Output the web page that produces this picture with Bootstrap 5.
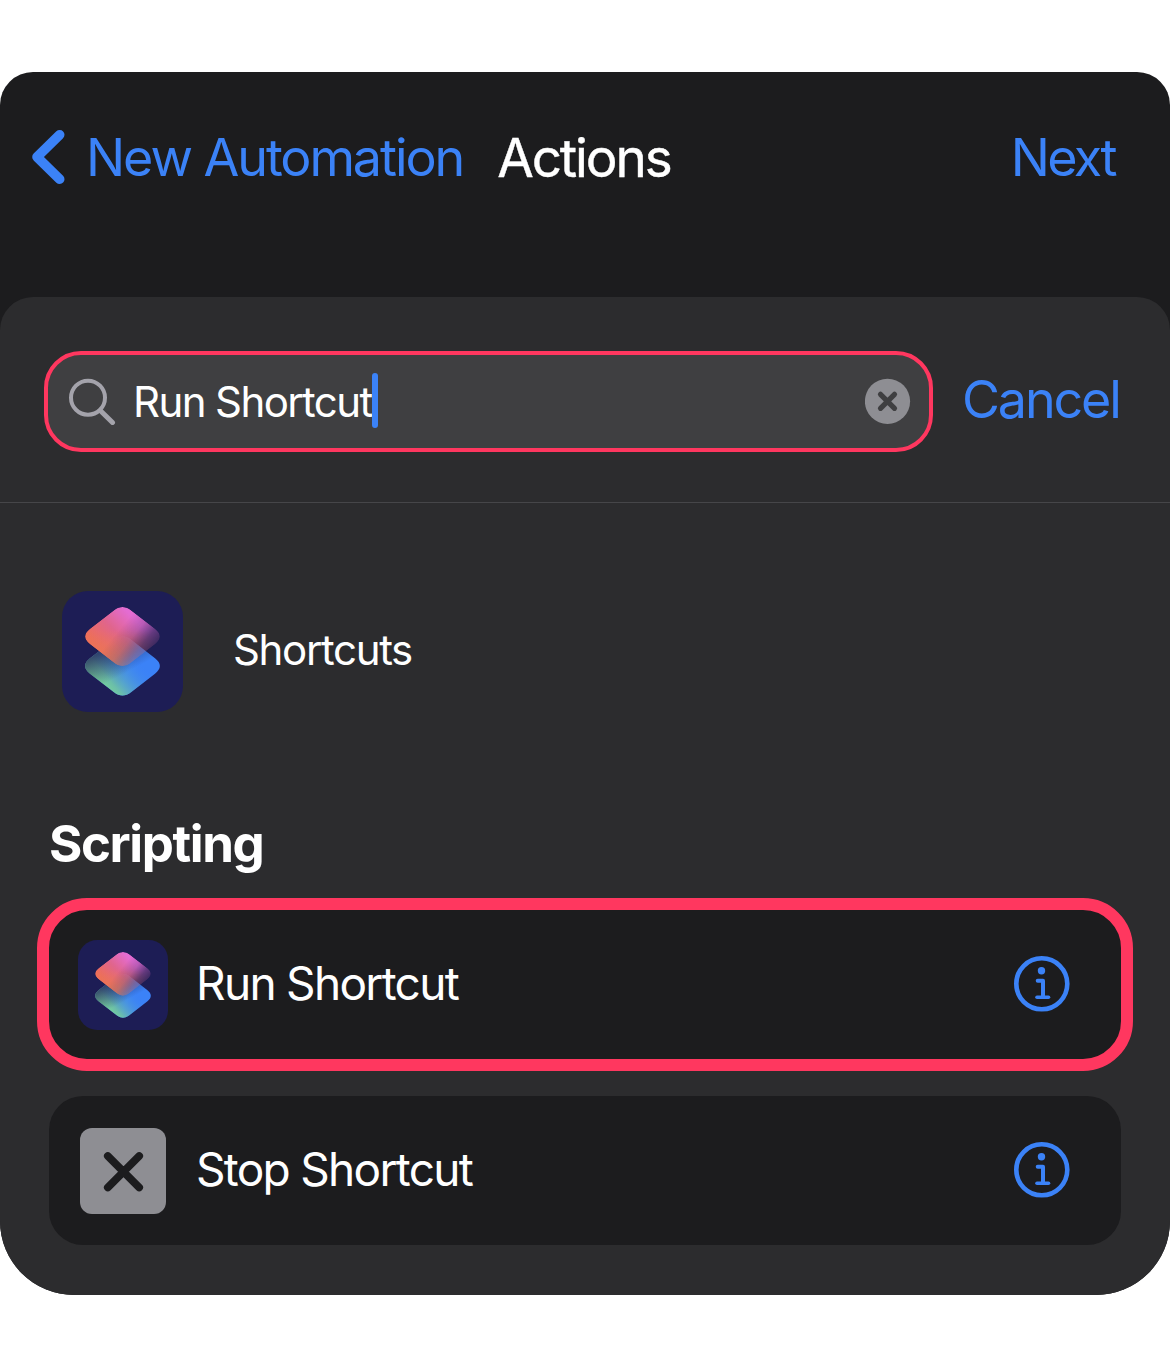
<!DOCTYPE html>
<html lang="en" data-bs-theme="dark">
<head>
<meta charset="utf-8">
<meta name="viewport" content="width=device-width, initial-scale=1">
<title>Actions</title>
<link href="https://cdn.jsdelivr.net/npm/bootstrap@5.3.0/dist/css/bootstrap.min.css" rel="stylesheet">
<style>
body { background: #fff; font-family: Inter, "Liberation Sans", sans-serif; line-height: 1; color: #fff; padding-top: 72px; height: 1346px; }
svg { display: block; flex: none; }
a, a:hover { color: #3b82f7; text-decoration: none; }
.phone { background: #1c1c1e; height: 1223px; border-radius: 33px 33px 74px 74px; }
.topbar { height: 170px; margin-bottom: 55px; padding: 0 55px 0 32px; }
.nav-text { font-size: 52px; white-space: nowrap; }
.topbar .nav-text { padding-top: 2px; }
.back-text { margin-left: 20px; letter-spacing: -2.080px; }
.title-text { margin-left: 34px; letter-spacing: -2.100px; font-size: 53px; -webkit-text-stroke: .4px #fff; }
.next-text { letter-spacing: -2.600px; }
.sheet { background: #2c2c2e; height: 998px; border-radius: 33px 33px 74px 74px; }
.search-row { height: 206px; padding: 54px 44px 0; border-bottom: 1px solid #464649; }
.search-field { width: 889px; height: 101px; border: 4px solid #ff375f; border-radius: 37px; background: #3f3f41; padding: 0 18px 1px 20px; }
.query { font-size: 42px; letter-spacing: -1.600px; margin-left: 17px; white-space: nowrap; padding-top: 1px; }
.caret { width: 6px; height: 55px; border-radius: 3px; background: #3b82f7; margin-bottom: 1px; }
.cancel-text { margin-left: 29px; letter-spacing: -2.150px; height: 97px; }
.app-row { padding: 88px 62px 0; height: 209px; }
.app-name { font-size: 42px; margin-left: 50px; letter-spacing: -1.350px; height: 118px; }
.section-title { font-size: 51px; font-weight: 700; letter-spacing: -1.400px; height: 54px; margin: 105px 0 27px 49px; }
.list-area { margin: 0 37px; }
.action-row { height: 149px; margin: 0 12px; border-radius: 34px; background: #1c1c1e; padding: 0 51px 0 29px; }
.action-row.chosen { height: 173px; margin: 0 0 25px; border: 12px solid #ff375f; border-radius: 50px; }
.action-name { font-size: 46px; letter-spacing: -1.700px; margin-left: 28px; white-space: nowrap; padding-bottom: 3px; }
.info-icon { margin-bottom: 2px; }
</style>
</head>
<body>
<svg width="0" height="0" class="position-absolute" aria-hidden="true">
  <defs>
    <path id="tile" d="M32.500-7.700C39-2.700 39 2.700 32.500 7.700L8.500 26.200C3 30.500-3 30.500-8.500 26.200L-32.500 7.700C-39 2.700-39-2.700-32.500-7.700L-8.500-26.200C-3-30.500 3-30.500 8.500-26.200Z"/>
    <linearGradient id="lowA" gradientUnits="userSpaceOnUse" x1="-30" y1="-12" x2="6" y2="4">
      <stop offset="0" stop-color="#3b82f7" stop-opacity=".3"/><stop offset="1" stop-color="#3b82f7"/>
    </linearGradient>
    <linearGradient id="lowB" gradientUnits="userSpaceOnUse" x1="-14" y1="27" x2="20" y2="-2">
      <stop offset="0" stop-color="#78d29c"/><stop offset=".2" stop-color="#70c5a4" stop-opacity=".92"/><stop offset="1" stop-color="#3b82f7" stop-opacity="0"/>
    </linearGradient>
    <linearGradient id="lowC" gradientUnits="userSpaceOnUse" x1="-26" y1="-16" x2="-10" y2="14">
      <stop offset="0" stop-color="#28305f" stop-opacity=".9"/><stop offset="1" stop-color="#28305f" stop-opacity="0"/>
    </linearGradient>
    <linearGradient id="upA" gradientUnits="userSpaceOnUse" x1="-28" y1="6" x2="4" y2="-26">
      <stop offset="0" stop-color="#ee6e58"/><stop offset=".5" stop-color="#e0658c"/><stop offset="1" stop-color="#e46cd2"/>
    </linearGradient>
    <linearGradient id="upB" gradientUnits="userSpaceOnUse" x1="-6" y1="30" x2="-6" y2="-6">
      <stop offset="0" stop-color="#e8765a"/><stop offset="1" stop-color="#e8765a" stop-opacity="0"/>
    </linearGradient>
    <linearGradient id="fade" gradientUnits="userSpaceOnUse" x1="-2" y1="-8" x2="26" y2="15">
      <stop offset="0" stop-color="#fff"/><stop offset=".4" stop-color="#fff" stop-opacity=".78"/><stop offset=".75" stop-color="#fff" stop-opacity=".36"/><stop offset="1" stop-color="#fff" stop-opacity=".18"/>
    </linearGradient>
    <mask id="upMask" maskUnits="userSpaceOnUse" x="-45" y="-35" width="90" height="70"><use href="#tile" fill="url(#fade)"/></mask>
    <symbol id="shortcuts" viewBox="0 0 121 121">
      <rect width="121" height="121" rx="26" fill="#1d1d55"/>
      <g transform="translate(60.5 75)"><use href="#tile" fill="url(#lowA)"/><use href="#tile" fill="url(#lowB)"/><use href="#tile" fill="url(#lowC)"/></g>
      <g transform="translate(60.5 45.500)"><g mask="url(#upMask)"><use href="#tile" fill="url(#upA)"/><use href="#tile" fill="url(#upB)"/></g></g>
    </symbol>
    <symbol id="info" viewBox="0 0 56 56">
      <g fill="none" stroke="#3b82f7" stroke-linecap="round" stroke-linejoin="round">
        <circle cx="27.800" cy="27.800" r="25.500" stroke-width="4.600"/>
        <path d="M23.700 24.700H29V41" stroke-width="4"/><path d="M23 41.300H34.500" stroke-width="3.600"/>
      </g>
      <circle cx="27.500" cy="14.800" r="3.700" fill="#3b82f7"/>
    </symbol>
  </defs>
</svg>
<main class="phone">
  <header class="topbar d-flex align-items-center">
    <a href="#" class="d-flex align-items-center">
      <svg width="34" height="56" viewBox="0 0 34 56"><path d="M27.700 5.800L5 28L27.700 50.200" fill="none" stroke="#3b82f7" stroke-width="9.600" stroke-linecap="round" stroke-linejoin="round"/></svg>
      <span class="nav-text back-text">New Automation</span>
    </a>
    <span class="nav-text title-text">Actions</span>
    <a href="#" class="nav-text next-text ms-auto">Next</a>
  </header>
  <section class="sheet">
    <div class="search-row d-flex align-items-start">
      <div class="search-field d-flex align-items-center flex-shrink-0">
        <svg width="48" height="48" viewBox="0 0 48 48" fill="none" stroke="#a4a3ab" stroke-linecap="round"><circle cx="20" cy="20.700" r="17" stroke-width="4"/><path d="M32.500 33.700L44.500 45.500" stroke-width="5"/></svg>
        <span class="query">Run Shortcut</span><span class="caret"></span>
        <svg class="ms-auto" width="46" height="46" viewBox="0 0 46 46"><circle cx="22.500" cy="23.300" r="22.600" fill="#8e8e93"/><path d="M15.500 16.300L29.500 30.300M29.500 16.300L15.500 30.300" stroke="#3f3f41" stroke-width="5.200" stroke-linecap="round"/></svg>
      </div>
      <a href="#" class="nav-text cancel-text d-flex align-items-center">Cancel</a>
    </div>
    <div class="app-row d-flex align-items-start">
      <svg width="121" height="121"><use href="#shortcuts"/></svg>
      <span class="app-name d-flex align-items-center">Shortcuts</span>
    </div>
    <h2 class="section-title d-flex align-items-center">Scripting</h2>
    <div class="list-area">
      <div class="action-row chosen d-flex align-items-center">
        <svg width="90" height="90"><use href="#shortcuts"/></svg>
        <span class="action-name">Run Shortcut</span>
        <svg class="info-icon ms-auto" width="56" height="56"><use href="#info"/></svg>
      </div>
      <div class="action-row d-flex align-items-center">
        <svg width="90" height="90" viewBox="0 0 90 90"><rect x="2" y="2" width="86" height="86" rx="12" fill="#8e8e93"/><path d="M29.800 30L61.200 61.500M61.200 30L29.800 61.500" stroke="#1c1c1e" stroke-width="7.700" stroke-linecap="round"/></svg>
        <span class="action-name">Stop Shortcut</span>
        <svg class="info-icon ms-auto" width="56" height="56"><use href="#info"/></svg>
      </div>
    </div>
  </section>
</main>
<script src="https://cdn.jsdelivr.net/npm/bootstrap@5.3.0/dist/js/bootstrap.bundle.min.js"></script>
</body>
</html>
